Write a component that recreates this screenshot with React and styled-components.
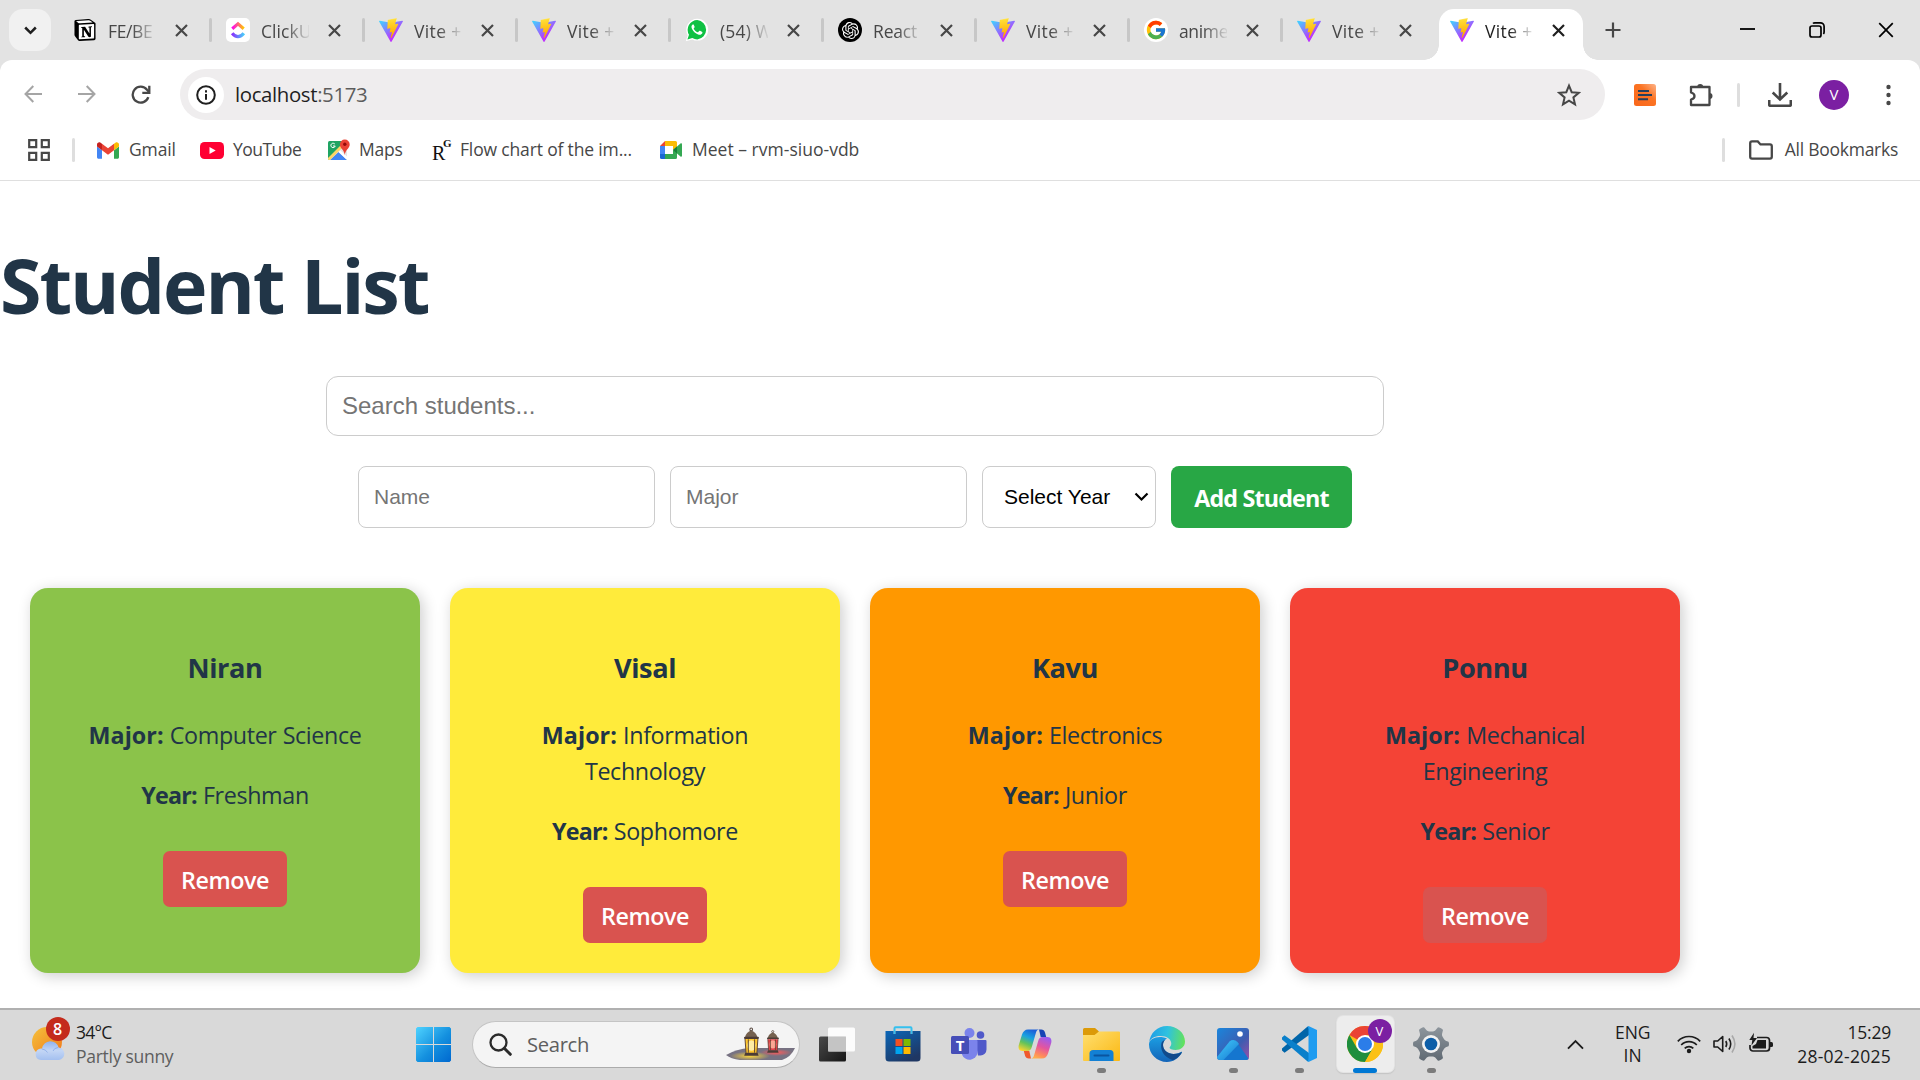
import React from "react";
import styled, { createGlobalStyle, css } from "styled-components";
import { SiNotion, SiOpenai } from "react-icons/si";
import { FcGoogle } from "react-icons/fc";

const UI = '"Segoe UI", "Open Sans", "Noto Sans", sans-serif';

const GlobalStyle = createGlobalStyle`
  *, *::before, *::after { box-sizing: border-box; }
  body { margin: 0; background: #fff; font-family: ${UI}; overflow: hidden; }
  svg { display: block; flex: none; }
`;

const Screen = styled.div`
  width: 1920px;
  height: 1080px;
  display: flex;
  flex-direction: column;
  overflow: hidden;
`;

const Txt = styled.span`
  font-family: ${UI};
  font-size: ${(p) => p.$size || 17.5}px;
  font-weight: ${(p) => p.$weight || 400};
  letter-spacing: ${(p) => p.$ls || 0}em;
  color: ${(p) => p.$color || "#474747"};
  white-space: nowrap;
`;

/* ---------- tab strip ---------- */
const TabStrip = styled.div`
  height: 60px;
  flex: none;
  background: #e3e3e3;
  display: flex;
  padding-left: 9px;
`;
const TabSearch = styled.button`
  width: 42px;
  height: 42px;
  margin: 9px 11px 0 0;
  border: 0;
  padding: 0;
  border-radius: 14px;
  background: #f1f1f1;
  display: flex;
  align-items: center;
  justify-content: center;
`;
const TabItem = styled.div`
  width: 144px;
  height: ${(p) => (p.$active ? 51 : 42)}px;
  margin-top: 9px;
  padding: 0 0 ${(p) => (p.$active ? 9 : 0)}px 11px;
  display: flex;
  align-items: center;
  flex: none;
  ${(p) =>
    p.$active &&
    css`
      position: relative;
      background: #fff;
      border-radius: 15px 15px 0 0;
      &::before,
      &::after {
        content: "";
        position: absolute;
        bottom: 0;
        width: 15px;
        height: 15px;
      }
      &::before {
        left: -15px;
        background: radial-gradient(circle at 0 0, transparent 14.5px, #fff 15px);
      }
      &::after {
        right: -15px;
        background: radial-gradient(circle at 100% 0, transparent 14.5px, #fff 15px);
      }
    `}
`;
const TabLabel = styled.div`
  width: 48px;
  margin: 2px 19px 0 11px;
  overflow: hidden;
  white-space: nowrap;
  font-size: 17.5px;
  line-height: 26px;
  letter-spacing: ${(p) => p.$ls}em;
  color: ${(p) => (p.$active ? "#1f1f1f" : "#474747")};
  mask-image: linear-gradient(to right, #000 50%, transparent 105%);
`;
const TabGap = styled.div`
  width: 9px;
  height: 24px;
  margin-top: 18px;
  flex: none;
  display: flex;
  justify-content: center;
  &::before {
    content: "";
    width: 3px;
    border-radius: 1.5px;
    background: ${(p) => (p.$hidden ? "transparent" : "#c7c7c7")};
  }
`;
const NewTab = styled.div`
  width: 60px;
  height: 60px;
  display: flex;
  align-items: center;
  justify-content: center;
`;
const WindowButtons = styled.div`
  margin-left: auto;
  display: flex;
  height: 59px;
`;
const WindowButton = styled.div`
  width: 69px;
  display: flex;
  align-items: center;
  justify-content: center;
`;
const Favicon = styled.div`
  width: 24px;
  height: 24px;
  flex: none;
  display: flex;
  align-items: center;
  justify-content: center;
  border-radius: ${(p) => p.$radius || 0};
  background: ${(p) => p.$bg || "transparent"};
`;

/* ---------- toolbar ---------- */
const ToolbarBack = styled.div`
  background: #e3e3e3;
  flex: none;
`;
const Toolbar = styled.div`
  height: 60px;
  background: #fff;
  border-radius: 12px 12px 0 0;
  display: flex;
  align-items: center;
  padding-top: 9px;
`;
const NavButton = styled.div`
  width: 54px;
  display: flex;
  justify-content: center;
  color: ${(p) => (p.$dim ? "#a5a5a5" : "#474747")};
`;
const NavGroup = styled.div`
  display: flex;
  flex: none;
  width: 180px;
  padding-left: 6px;
`;
const Omnibox = styled.div`
  flex: none;
  width: 1425px;
  height: 51px;
  border-radius: 26px;
  background: #efedee;
  display: flex;
  align-items: center;
  padding: 0 24px 0 8px;
`;
const InfoChip = styled.div`
  width: 36px;
  height: 36px;
  border-radius: 50%;
  background: #fff;
  display: flex;
  align-items: center;
  justify-content: center;
  margin-right: 11px;
`;
const UrlText = styled(Txt)`
  padding-bottom: 2px;
`;
const Spacer = styled.div`
  flex: 1;
`;
const ToolbarRight = styled.div`
  flex: none;
  display: grid;
  grid-template-columns: 55px 57px 19px 64px 44px 64px;
  padding-left: 12px;
  align-items: center;
  justify-items: center;
`;
const Divider = styled.div`
  width: 3px;
  height: 24px;
  border-radius: 1.5px;
  background: #dedede;
`;
const Avatar = styled.div`
  width: ${(p) => p.$size}px;
  height: ${(p) => p.$size}px;
  border-radius: 50%;
  background: #7b1fa2;
  color: #fff;
  font-size: ${(p) => p.$font}px;
  line-height: 1;
  display: flex;
  align-items: center;
  justify-content: center;
`;

/* ---------- bookmarks ---------- */
const Bookmarks = styled.div`
  height: 61px;
  flex: none;
  border-bottom: 1px solid #dfdfdf;
  display: flex;
  align-items: center;
  padding: 0 22px 0 28px;
`;
const Bookmark = styled.div`
  display: flex;
  align-items: center;
  width: ${(p) => (p.$w ? p.$w + "px" : "auto")};
  gap: ${(p) => p.$gap || 9}px;
`;
const BookmarkText = styled(Txt)`
  padding-bottom: 2px;
`;

/* ---------- page ---------- */
const Page = styled.main`
  flex: 1;
  min-height: 0;
  width: 1710px;
  padding-top: 62px;
`;
const Title = styled.h1`
  margin: 0 0 49px;
  font-size: 75.3px;
  line-height: 84px;
  font-weight: 700;
  letter-spacing: -0.0275em;
  color: #213547;
`;
const SearchInput = styled.input`
  display: block;
  width: 1058px;
  height: 60px;
  margin: 0 auto 30px;
  padding: 0 15px;
  border: 1px solid #ccc;
  border-radius: 12px;
  font: 24px "Liberation Sans", Arial, sans-serif;
  outline: none;
  &::placeholder { color: #757575; opacity: 1; }
`;
const Form = styled.form`
  display: flex;
  justify-content: center;
  gap: 15px;
  height: 62px;
  margin-bottom: 60px;
`;
const Field = styled.input`
  width: 297px;
  padding: 0 15px;
  border: 1px solid #ccc;
  border-radius: 8px;
  font: 21px "Liberation Sans", Arial, sans-serif;
  outline: none;
  &::placeholder { color: #757575; opacity: 1; }
`;
const SelectBox = styled.label`
  width: 174px;
  border: 1px solid #ccc;
  border-radius: 8px;
  display: flex;
  align-items: center;
  padding: 0 6px 1px 21px;
  background: #fff;
`;
const YearSelect = styled.select`
  appearance: none;
  flex: 1;
  min-width: 0;
  border: 0;
  padding: 0;
  background: transparent;
  color: #000;
  font: 21px "Liberation Sans", Arial, sans-serif;
`;
const AddButton = styled.button`
  width: 181px;
  border: 0;
  border-radius: 8px;
  background: #28a745;
  color: #fff;
  font: 700 23.3px ${UI};
  letter-spacing: -0.036em;
  padding: 2px 0 0;
  white-space: nowrap;
`;
const Cards = styled.section`
  display: grid;
  grid-template-columns: repeat(4, 390px);
  gap: 30px;
  padding: 0 30px;
`;
const Card = styled.article`
  height: 385px;
  border-radius: 18px;
  background: ${(p) => p.$bg};
  box-shadow: 3px 3px 15px rgba(0, 0, 0, 0.2);
  padding: 59px 52px 30px;
  text-align: center;
  color: #213547;
`;
const CardName = styled.h3`
  margin: 0 0 28px;
  font-size: 27.2px;
  line-height: 42px;
  font-weight: 700;
  letter-spacing: -0.016em;
`;
const CardLine = styled.p`
  margin: 0 0 24px;
  font-size: 23.3px;
  line-height: 36px;
  letter-spacing: -0.016em;
  word-spacing: 0.02em;
`;
const Strong = styled.strong`
  font-weight: 700;
  letter-spacing: ${(p) => p.$ls}em;
`;
const RemoveButton = styled.button`
  width: 124px;
  height: 56px;
  margin-top: 14px;
  border: 0;
  border-radius: 7px;
  background: #d9534f;
  color: #fff;
  font: 600 23.3px ${UI};
  letter-spacing: -0.018em;
  padding: 2px 0 0;
`;

/* ---------- taskbar ---------- */
const Taskbar = styled.footer`
  height: 72px;
  flex: none;
  border-top: 2px solid #b0b0b0;
  background: #d9d9d9;
  display: flex;
  align-items: stretch;
`;
const Weather = styled.div`
  width: 400px;
  display: flex;
  align-items: center;
  padding: 0 0 2px 31px;
  gap: 7px;
`;
const WeatherIcon = styled.div`
  position: relative;
  width: 38px;
  height: 50px;
`;
const AlertBadge = styled.div`
  position: absolute;
  left: 14.5px;
  top: -2px;
  width: 24px;
  height: 24px;
  border-radius: 50%;
  background: #c42b1c;
  color: #fff;
  font-size: 16px;
  font-weight: 600;
  line-height: 24px;
  text-align: center;
`;
const Stack = styled.div`
  display: flex;
  flex-direction: column;
  align-items: ${(p) => p.$align || "flex-start"};
  line-height: ${(p) => p.$lh || 24}px;
`;
const StartButton = styled.div`
  width: 72px;
  display: flex;
  align-items: center;
  padding: 0 0 1px 16px;
`;
const SearchPill = styled.div`
  width: 328px;
  height: 47px;
  margin-top: 11px;
  border: 1.5px solid #c4c4c4;
  border-bottom-color: #ababab;
  border-radius: 24px;
  background: #f4f4f4;
  display: flex;
  align-items: center;
  padding: 0 3px 1px 16px;
`;
const SearchLabel = styled(Txt)`
  margin-left: 15px;
  padding-bottom: 1px;
`;
const Apps = styled.div`
  display: flex;
  margin-left: 4px;
`;
const AppSlot = styled.div`
  width: 66px;
  height: 70px;
  display: flex;
  flex-direction: column;
  align-items: center;
  padding-top: 6px;
`;
const AppTile = styled.div`
  position: relative;
  width: 57px;
  height: 56px;
  border-radius: 6px;
  display: flex;
  align-items: center;
  justify-content: center;
  ${(p) =>
    p.$active &&
    css`
      background: #ededed;
      box-shadow: 0 0 0 1px #e3e3e3, 0 1px 1px 1px #c4c4c4;
    `}
`;
const Indicator = styled.div`
  position: relative;
  width: ${(p) => (p.$active ? 24 : 9)}px;
  height: 5px;
  margin-top: -4px;
  border-radius: 2.5px;
  background: ${(p) => (p.$active ? "#0078d4" : "#7c7c7c")};
`;
const ProfileBadge = styled.div`
  position: absolute;
  right: 2px;
  top: 3px;
`;
const Tray = styled.div`
  margin-left: auto;
  padding: 0 29px 2px 0;
  display: flex;
  align-items: center;
`;
const TrayChevron = styled.svg`
  margin-right: 31px;
`;
const TrayIcons = styled.div`
  display: flex;
  gap: 12px;
  margin: 0 24px 0 27px;
`;

/* ---------- icons ---------- */
const CloseX = ({ color = "#474747", s = 13, w = 2.2 }) => (
  <svg width={s} height={s} viewBox="0 0 13 13">
    <path d="M1 1l11 11M12 1L1 12" stroke={color} strokeWidth={w} fill="none" />
  </svg>
);

const ViteLogo = () => (
  <svg width="24" height="24" viewBox="0 0 256 257">
    <defs>
      <linearGradient id="viteA" x1="-.828%" x2="57.636%" y1="7.652%" y2="78.411%">
        <stop offset="0%" stopColor="#41D1FF" />
        <stop offset="100%" stopColor="#BD34FE" />
      </linearGradient>
      <linearGradient id="viteB" x1="43.376%" x2="50.316%" y1="2.242%" y2="89.03%">
        <stop offset="0%" stopColor="#FFEA83" />
        <stop offset="8.333%" stopColor="#FFDD35" />
        <stop offset="100%" stopColor="#FFA800" />
      </linearGradient>
    </defs>
    <path fill="url(#viteA)" d="M255.153 37.938L134.897 252.976c-2.483 4.44-8.862 4.466-11.382.048L.875 37.958c-2.746-4.814 1.371-10.646 6.827-9.67l120.385 21.517a6.537 6.537 0 0 0 2.322-.004l117.867-21.483c5.438-.991 9.574 4.796 6.877 9.62Z" />
    <path fill="url(#viteB)" d="M185.432.063L96.44 17.501a3.268 3.268 0 0 0-2.634 3.014l-5.474 92.456a3.268 3.268 0 0 0 3.997 3.378l24.777-5.718c2.318-.535 4.413 1.507 3.936 3.838l-7.361 36.047c-.495 2.426 1.782 4.5 4.151 3.78l15.304-4.649c2.372-.72 4.652 1.36 4.15 3.788l-11.698 56.621c-.732 3.542 3.979 5.473 5.943 2.437l1.313-2.028l72.516-144.72c1.215-2.423-.88-5.186-3.54-4.672l-25.505 4.922c-2.396.462-4.435-1.77-3.759-4.114l16.646-57.705c.677-2.35-1.37-4.583-3.769-4.113Z" />
  </svg>
);

const NotionIcon = () => (
  <Favicon $bg="radial-gradient(#fff 60%, transparent 70%)">
    <SiNotion size={22} color="#000" />
  </Favicon>
);

const ClickUpIcon = () => (
  <Favicon $bg="#fff" $radius="5px">
    <svg width="24" height="24" viewBox="0 0 24 24">
      <defs>
        <linearGradient id="cuTop" x1="0" x2="1">
          <stop offset="0" stopColor="#ff02f0" />
          <stop offset="1" stopColor="#ffc800" />
        </linearGradient>
        <linearGradient id="cuBottom" x1="0" x2="1">
          <stop offset="0" stopColor="#8930fd" />
          <stop offset="1" stopColor="#49ccf9" />
        </linearGradient>
      </defs>
      <path d="M6.3 10.7L12 5.8l5.7 4.9" fill="none" stroke="url(#cuTop)" strokeWidth="3.2" />
      <path d="M6.2 15.2q2.6 3.4 5.8 3.4t5.8-3.4" fill="none" stroke="url(#cuBottom)" strokeWidth="3.2" />
    </svg>
  </Favicon>
);

const WhatsAppIcon = () => (
  <svg width="24" height="24" viewBox="0 0 24 24">
    <path d="M12.3 0.8a10.8 10.8 0 0 1 0 21.8 11 11 0 0 1-5-1.2L.8 23.2l1.9-6A11 11 0 0 1 12.3.8z" fill="#fff" />
    <path d="M12.3 2a9.8 9.8 0 0 1 0 19.5 10 10 0 0 1-5-1.4l-4.9 1.5 1.6-4.8A9.8 9.8 0 0 1 12.3 2z" fill="#0fc143" />
    <path d="M8.9 6.9c-.3-.6-1.2-.5-1.7 0-1 1-1 2.5 0 4.3 1.4 2.5 3.3 4.3 5.9 5.2 2 .7 3.6.1 4.2-1.2.2-.5.2-1 0-1.2l-2.200-1.200c-.4-.2-.7-.1-1 .3l-.8 1c-.2.2-.4.2-.7.1-1.7-.7-2.9-1.8-3.8-3.3-.2-.3-.1-.5.1-.7l.7-.9c.1-.2.1-.4 0-.6z" fill="#fff" />
  </svg>
);

const OpenAiIcon = () => (
  <Favicon $bg="#000" $radius="50%">
    <SiOpenai size={17} color="#fff" />
  </Favicon>
);

const GoogleIcon = () => (
  <Favicon $bg="#fff" $radius="50%">
    <FcGoogle size={22} />
  </Favicon>
);

const GmailIcon = () => (
  <svg width="22" height="17" viewBox="52 42 88 66">
    <path fill="#4285f4" d="M58 108h14V74L52 59v43c0 3.32 2.69 6 6 6" />
    <path fill="#34a853" d="M120 108h14c3.32 0 6-2.69 6-6V59l-20 15" />
    <path fill="#fbbc04" d="M120 48v26l20-15v-8c0-7.42-8.47-11.65-14.4-7.2" />
    <path fill="#ea4335" d="M72 74V48l24 18 24-18v26L96 92" />
    <path fill="#c5221f" d="M52 51v8l20 15V48l-5.6-4.2c-5.94-4.45-14.4-.22-14.4 7.2" />
  </svg>
);

const YouTubeIcon = () => (
  <svg width="24" height="17" viewBox="0 0 24 17">
    <rect width="24" height="17" rx="4.5" fill="#ff0033" />
    <path d="M9.5 4.9v7.2l6.2-3.6z" fill="#fff" />
  </svg>
);

const MapsIcon = () => (
  <svg width="22" height="22" viewBox="0 0 22 22">
    <defs>
      <clipPath id="mapClip">
        <rect x="0" y="2" width="19" height="19" rx="1.5" />
      </clipPath>
    </defs>
    <g clipPath="url(#mapClip)">
      <rect x="0" y="2" width="19" height="19" fill="#1fa463" />
      <path d="M0 21L19 2v19z" fill="#e6e6e6" />
      <path d="M2 21l8.5-8L19 21z" fill="#4285f4" />
      <path d="M-1 20L17 2l2 2L1 22z" fill="#fdd567" />
      <path d="M10.5 13l8.5 8v-3.5l-6.8-6.3z" fill="#fff" />
    </g>
    <path d="M6.9 5.2A2.2 2.2 0 1 0 7.200 7H5" stroke="#fff" strokeWidth="1" fill="none" />
    <path d="M16.8.5a4.9 4.9 0 0 1 4.9 4.9c0 4.1-4.4 5-4.9 10.6-.5-5.6-4.900-6.500-4.900-10.600A4.900 4.900 0 0 1 16.800.5z" fill="#ea4335" />
    <circle cx="16.8" cy="5.3" r="1.7" fill="#960a0a" />
  </svg>
);

const ResearchGate = styled.div`
  width: 20px;
  height: 24px;
  display: flex;
  align-items: flex-start;
  font-family: "Liberation Serif", serif;
  color: #111;
`;
const RgR = styled.span`
  font-size: 20px;
  line-height: 30px;
  width: 11px;
`;
const RgG = styled.span`
  font-size: 11px;
  line-height: 11px;
  font-weight: 700;
`;

const MeetIcon = () => (
  <svg width="22" height="18" viewBox="0 0 22 18">
    <path d="M0 5L5 0v5z" fill="#ea4335" />
    <path d="M5 0h10.500a1.500 1.500 0 0 1 1.500 1.500V7l-4 2V5H5z" fill="#fbbc04" />
    <path d="M0 5h5v8H0z" fill="#4285f4" />
    <path d="M0 13h5v5H1.500A1.500 1.500 0 0 1 0 16.500z" fill="#1967d2" />
    <path d="M5 13h8V9l4 2v5.500a1.500 1.500 0 0 1-1.500 1.500H5z" fill="#34a853" />
    <path d="M13 9l7.500-6.500c.6-.5 1.500-.1 1.500.7v11.600c0 .8-.9 1.200-1.500.7z" fill="#34a853" />
    <path d="M13 9l4-3.500v7z" fill="#188038" />
  </svg>
);

const TABS = [
  { icon: NotionIcon, label: "FE/BE", ls: -0.02 },
  { icon: ClickUpIcon, label: "ClickUp", ls: 0.005 },
  { icon: ViteLogo, label: "Vite + R", ls: 0.02 },
  { icon: ViteLogo, label: "Vite + R", ls: 0.02 },
  { icon: WhatsAppIcon, label: "(54) Wh", ls: 0.01 },
  { icon: OpenAiIcon, label: "React (", ls: -0.01 },
  { icon: ViteLogo, label: "Vite + R", ls: 0.02 },
  { icon: GoogleIcon, label: "anime i", ls: -0.02 },
  { icon: ViteLogo, label: "Vite + R", ls: 0.02 },
  { icon: ViteLogo, label: "Vite + R", ls: 0.02, active: true },
];

const STUDENTS = [
  { name: "Niran", major: "Computer Science", year: "Freshman", bg: "#8bc34a" },
  { name: "Visal", major: "Information Technology", year: "Sophomore", bg: "#ffeb3b" },
  { name: "Kavu", major: "Electronics", year: "Junior", bg: "#ff9800" },
  { name: "Ponnu", major: "Mechanical Engineering", year: "Senior", bg: "#f44336" },
];

const SunCloud = () => (
  <svg width="38" height="50" viewBox="0 0 38 50">
    <defs>
      <linearGradient id="sun" x1="0" y1="0" x2="1" y2="1">
        <stop offset="0" stopColor="#f5c23c" />
        <stop offset="1" stopColor="#f0761a" />
      </linearGradient>
      <linearGradient id="cloud" x1="0" y1="0" x2="0" y2="1">
        <stop offset="0" stopColor="#8fb2ee" />
        <stop offset="0.5" stopColor="#c3d6f5" />
        <stop offset="1" stopColor="#a4c0f0" />
      </linearGradient>
    </defs>
    <circle cx="16" cy="23" r="15" fill="url(#sun)" />
    <path d="M10 41a5.8 5.8 0 0 1-.5-11.5 3 3 0 0 1 1.5 0 8.5 8.5 0 0 1 16.6-1A6.3 6.3 0 0 1 28 41z" fill="url(#cloud)" />
    <path d="M11 30q4 .5 5.500 3.500M27 28.500q-4 .5-5 3.500" stroke="#7ea3e6" strokeWidth="1" fill="none" opacity=".7" />
  </svg>
);

const WindowsLogo = () => (
  <svg width="35" height="35" viewBox="0 0 35 35">
    <defs>
      <linearGradient id="win" x1="0" y1="0" x2="35" y2="35" gradientUnits="userSpaceOnUse">
        <stop offset="0" stopColor="#4fd3ff" />
        <stop offset="0.55" stopColor="#1490df" />
        <stop offset="1" stopColor="#0068cf" />
      </linearGradient>
    </defs>
    <path fill="url(#win)" d="M1.500 0H17v17H0V1.500zM18 0h15.500L35 1.500V17H18zM0 18h17v17H1.500L0 33.500zM18 18h17v15.500L33.500 35H18z" />
  </svg>
);

const Lantern = ({ x, y, k, glass, glow }) => (
  <g transform={`translate(${x} ${y}) scale(${k})`}>
    <circle cx="7" cy="1.4" r="1.3" fill="none" stroke="#5a4a42" strokeWidth="1" />
    <path d="M7 2.500c3 .8 5.500 3.500 6 6.500H1c.5-3 3-5.700 6-6.500z" fill="#75614f" />
    <rect x="0" y="8.500" width="14.500" height="2.200" rx="1" fill="#4c3c36" />
    <path d="M1 10.700h12.500l-1 13.500h-10.500z" fill={glass} />
    <ellipse cx="7.200" cy="17" rx="4" ry="5" fill={glow} opacity=".85" />
    <path d="M1 10.700l1 13.500M13.500 10.700l-1 13.500M4.200 11v13M10.300 11v13" stroke="#5a4030" strokeWidth=".9" fill="none" />
    <path d="M1.200 24h12l1 3H.2z" fill="#4c3c36" />
  </g>
);

const LanternArt = () => (
  <svg width="70" height="40" viewBox="0 0 70 40">
    <defs>
      <radialGradient id="glowY">
        <stop offset="0" stopColor="#ffd83a" />
        <stop offset="1" stopColor="#ffd83a" stopOpacity="0" />
      </radialGradient>
      <radialGradient id="glowR">
        <stop offset="0" stopColor="#ff5a5a" />
        <stop offset="1" stopColor="#ff5a5a" stopOpacity="0" />
      </radialGradient>
    </defs>
    <path d="M0 31q10-6 24-7h45q-4 9-13 12H14Q5 35 0 31z" fill="#777282" />
    <ellipse cx="24" cy="32" rx="20" ry="4.500" fill="url(#glowY)" />
    <ellipse cx="50" cy="28.500" rx="16" ry="3.500" fill="url(#glowR)" />
    <Lantern x={18} y={4} k={1.03} glass="#ffc72e" glow="#fff3b8" />
    <Lantern x={41} y={6.5} k={0.82} glass="#e0434a" glow="#ffb9a0" />
  </svg>
);

const TaskViewIcon = () => (
  <svg width="36" height="35" viewBox="0 0 36 35">
    <defs>
      <linearGradient id="tvDark" x1="0" y1="0" x2="1" y2="1">
        <stop offset="0" stopColor="#4a4a4a" />
        <stop offset="1" stopColor="#161616" />
      </linearGradient>
    </defs>
    <rect x="0" y="9.500" width="27" height="25" rx="1.500" fill="url(#tvDark)" />
    <rect x="9" y="0.500" width="27" height="24" rx="1.500" fill="#fff" fillOpacity=".9" />
    <rect x="9" y="9.500" width="18" height="15" fill="#bdbdbd" opacity=".85" />
  </svg>
);

const StoreIcon = () => (
  <svg width="36" height="36" viewBox="0 0 36 36">
    <defs>
      <linearGradient id="store" x1="0" y1="0" x2=".6" y2="1">
        <stop offset="0" stopColor="#0a66b8" />
        <stop offset="1" stopColor="#1f3763" />
      </linearGradient>
    </defs>
    <path d="M9.500 8V2.200a1 1 0 0 1 1-1h15a1 1 0 0 1 1 1V8" fill="none" stroke="#35c0ee" strokeWidth="2" />
    <path d="M.5 5h8v3h2V5h15v3h2V5h8v27a3.500 3.500 0 0 1-3.500 3.500H4A3.500 3.500 0 0 1 .5 32z" fill="url(#store)" />
    <rect x="10.500" y="13" width="7" height="7" fill="#f25022" />
    <rect x="18.500" y="13" width="7" height="7" fill="#7fba00" />
    <rect x="10.500" y="21" width="7" height="7" fill="#00a4ef" />
    <rect x="18.500" y="21" width="7" height="7" fill="#ffb900" />
  </svg>
);

const TeamsIcon = () => (
  <svg width="36" height="36" viewBox="0 0 36 36">
    <circle cx="18.500" cy="7" r="5" fill="#7b83eb" />
    <circle cx="29.500" cy="9" r="3.800" fill="#5059c9" />
    <path d="M24 14h10.500a1 1 0 0 1 1 1v8.500a6 6 0 0 1-6 6H27z" fill="#5059c9" />
    <path d="M11 14h14.500a1 1 0 0 1 1 1v11.500a8 8 0 0 1-15.500 2z" fill="#7b83eb" />
    <rect x="0" y="10" width="18" height="18" rx="1.500" fill="#464eb8" />
    <text x="9" y="24.500" textAnchor="middle" fontFamily="Open Sans, sans-serif" fontWeight="700" fontSize="15" fill="#fff">T</text>
  </svg>
);

const CopilotIcon = () => (
  <svg width="36" height="36" viewBox="0 0 36 36">
    <defs>
      <linearGradient id="cpA" x1=".6" y1="0" x2=".2" y2="1">
        <stop offset="0" stopColor="#1c5fd8" />
        <stop offset=".35" stopColor="#19a2e0" />
        <stop offset=".65" stopColor="#63c35a" />
        <stop offset="1" stopColor="#ffd52e" />
      </linearGradient>
      <linearGradient id="cpB" x1=".7" y1="0" x2=".3" y2="1">
        <stop offset="0" stopColor="#9a5cf0" />
        <stop offset=".45" stopColor="#e3559f" />
        <stop offset=".8" stopColor="#ff8a5c" />
        <stop offset="1" stopColor="#ffb04a" />
      </linearGradient>
    </defs>
    <path d="M22 3.500h2.200a4 4 0 0 1 3.800 2.900L29.200 11h-5.500z" fill="#1743b5" />
    <path d="M11 3.500h11.500c-2 0-3 1.300-3.500 3L14.800 21c-.7 2.500-2 4-4.500 4H5.500C2 25 1 22 1.800 19L5 8.500C6 5.500 8 3.500 11 3.500z" fill="url(#cpA)" />
    <path d="M25 32.500H13.500c2 0 3-1.300 3.500-3L21.200 15c.7-2.500 2-4 4.500-4h4.800c3.500 0 4.500 3 3.700 6L31 27.500c-1 3-3 5-6 5z" fill="url(#cpB)" />
    <path d="M14 32.500h-2.200A4 4 0 0 1 8 29.600L6.800 25h5.500z" fill="#f0592c" />
  </svg>
);

const ExplorerIcon = () => (
  <svg width="37" height="36" viewBox="0 0 37 36">
    <defs>
      <linearGradient id="fold" x1="0" y1="0" x2="1" y2="1">
        <stop offset="0" stopColor="#ffdf70" />
        <stop offset="1" stopColor="#fbb813" />
      </linearGradient>
    </defs>
    <path d="M0 10V3.500A1.500 1.500 0 0 1 1.500 2H12l4 3.500L12 10z" fill="#dc9a08" />
    <path d="M0 9h11.500L16 5.500h20a1 1 0 0 1 1 1V34a1 1 0 0 1-1 1H1a1 1 0 0 1-1-1z" fill="url(#fold)" />
    <path d="M6.500 35v-7.500A3.500 3.500 0 0 1 10 24h17a3.500 3.500 0 0 1 3.500 3.500V35z" fill="#1380d4" />
    <path d="M11.500 29.500h14" stroke="#0a55a0" strokeWidth="2" strokeLinecap="round" />
  </svg>
);

const EdgeIcon = () => (
  <svg width="36" height="36" viewBox="0 0 36 36">
    <defs>
      <linearGradient id="edT" x1="0" y1=".4" x2="1" y2=".5">
        <stop offset="0" stopColor="#1f9de6" />
        <stop offset=".5" stopColor="#2fc2df" />
        <stop offset="1" stopColor="#63e25a" />
      </linearGradient>
      <linearGradient id="edL" x1="0" y1="0" x2="0" y2="1">
        <stop offset="0" stopColor="#1b9de2" />
        <stop offset="1" stopColor="#1464b8" />
      </linearGradient>
    </defs>
    <path d="M0 18.500C0 13.800 5 11 11 11c4 0 7 1.500 7 1.500s-4 2-4 6.500c0 5.500 5 9 10.500 9 3.500 0 6-1.200 7.700-2.200.6-.3 1 .2.700.7C30 32 24.500 36 18 36 8 36 0 28 0 18.500z" fill="url(#edL)" />
    <path d="M12.500 17c-1.500 6 1.500 14 11.500 17.200C31 31 33 26.500 33 26c-1.700 1-5 2-8.500 2-5.500 0-10.300-3.500-10.500-9 0-2.500 1-4 2-5-2 .5-3 1.500-3.500 3z" fill="#114a8b" />
    <path d="M.2 16.500C1 7 8.500 0 18 0c10 0 18 7 18 15.500 0 5.500-4.500 8.500-9.500 8.500-3.500 0-6-1-6-2.200 0-.8 1.800-1.600 1.800-4.300 0-4-4.300-7.500-10.800-7.500C5.500 10 1.300 12.500.2 16.500z" fill="url(#edT)" />
  </svg>
);

const PhotosIcon = () => (
  <svg width="32" height="36" viewBox="0 0 32 36">
    <defs>
      <linearGradient id="phB" x1="0" y1="0" x2="1" y2="1">
        <stop offset="0" stopColor="#1a86dc" />
        <stop offset=".6" stopColor="#3e5cb0" />
        <stop offset="1" stopColor="#9b4fa8" />
      </linearGradient>
      <linearGradient id="phM" x1="0" y1="0" x2="1" y2="1">
        <stop offset="0" stopColor="#46d3ff" />
        <stop offset="1" stopColor="#1474cf" />
      </linearGradient>
      <clipPath id="phC">
        <rect y="2" width="32" height="32" rx="3" />
      </clipPath>
    </defs>
    <g clipPath="url(#phC)">
      <rect y="2" width="32" height="32" fill="url(#phB)" />
      <path d="M13.500 15q3.500-2 6.500 1.500L34 36H2z" fill="#1576cf" />
      <path d="M12.500 15.500q4-3 8 .5l1.500 2L4.500 36H-4z" fill="url(#phM)" />
    </g>
    <circle cx="23" cy="8" r="2.800" fill="#fff" />
  </svg>
);

const CodeIcon = () => (
  <svg width="36" height="36" viewBox="0 0 36 36">
    <path d="M1 24.500l2.500 2.200L28 9V.5L26 1 1 22.500z" fill="#0065a9" />
    <path d="M1 11.500l2.500-2.200L28 27v8.500L26 35 1 13.500z" fill="#0a80cb" />
    <path d="M26 .5l2-.3L36 4v28l-8 3.800-2-.3q1.500-.5 1.500-2.500V3Q27.500 1 26 .5z" fill="#1f9cf0" />
  </svg>
);

const ChromeIcon = () => (
  <svg width="36" height="36" viewBox="0 0 36 36">
    <circle cx="18" cy="18" r="18" fill="#fbc116" />
    <path d="M18 18L2.410 9A18 18 0 0 1 33.590 9H18z" fill="#ea4335" />
    <path d="M18 18L10.200 22.500 2.410 9A18 18 0 0 0 18 36l7.800-13.500z" fill="#1e8e3e" />
    <path d="M18 9h15.590A18 18 0 0 1 18 36l7.800-13.500z" fill="#fbc116" />
    <circle cx="18" cy="18" r="9" fill="#fff" />
    <circle cx="18" cy="18" r="7" fill="#2b7de9" />
  </svg>
);

const SettingsIcon = () => (
  <svg width="36" height="36" viewBox="0 0 36 36">
    <defs>
      <linearGradient id="gear" x1="0" y1="0" x2="0" y2="1">
        <stop offset="0" stopColor="#8d959c" />
        <stop offset="1" stopColor="#606a73" />
      </linearGradient>
    </defs>
    <path d="M8 2.200q2-1.200 3-.9l2.800 3.200q1.200 1 2.700 1h3q1.500 0 2.700-1L25 1.300q1 0 3 .9 1.800 1 2 1.800l-1 4q-.2 1.500.6 2.800l1.500 2.500q.8 1.200 2.200 1.700l2.200.8q.5 1 .5 2.200t-.5 2.200l-2.200.8q-1.400.5-2.200 1.700l-1.500 2.500q-.8 1.300-.6 2.800l1 4q-.2.8-2 1.800-2 1-3 .9l-2.800-3.200q-1.200-1-2.700-1h-3q-1.500 0-2.700 1L11 34.700q-1 0-3-.9-1.800-1-2-1.800l1-4q.2-1.500-.6-2.800l-1.500-2.500q-.8-1.200-2.200-1.700L.5 20.200Q0 19.200 0 18t.5-2.200l2.200-.8q1.400-.5 2.200-1.700l1.500-2.500Q7.200 9.500 7 8L6 4q.2-.8 2-1.800z" fill="url(#gear)" />
    <circle cx="18" cy="18" r="9" fill="#f2f2f2" />
    <circle cx="18" cy="18" r="6.300" fill="#0d5ea8" />
  </svg>
);

const APPS = [
  { icon: TaskViewIcon },
  { icon: StoreIcon },
  { icon: TeamsIcon },
  { icon: CopilotIcon },
  { icon: ExplorerIcon, open: true },
  { icon: EdgeIcon },
  { icon: PhotosIcon, open: true },
  { icon: CodeIcon, open: true },
  { icon: ChromeIcon, open: true, active: true },
  { icon: SettingsIcon, open: true },
];

function BrowserTabs() {
  return (
    <TabStrip>
      <TabSearch>
        <svg width="13" height="9" viewBox="0 0 13 9">
          <path d="M1.200 1.500L6.500 6.800l5.300-5.300" fill="none" stroke="#1f1f1f" strokeWidth="2.500" />
        </svg>
      </TabSearch>
      {TABS.map((t, i) => (
        <React.Fragment key={i}>
          <TabItem $active={t.active}>
            <t.icon />
            <TabLabel $ls={t.ls} $active={t.active}>{t.label}</TabLabel>
            <CloseX color={t.active ? "#1f1f1f" : "#474747"} />
          </TabItem>
          {i < TABS.length - 1 && <TabGap $hidden={i === TABS.length - 2} />}
        </React.Fragment>
      ))}
      <NewTab>
        <svg width="16" height="16" viewBox="0 0 16 16">
          <path d="M8 .5v15M.5 8h15" stroke="#474747" strokeWidth="2.200" />
        </svg>
      </NewTab>
      <WindowButtons>
        <WindowButton>
          <svg width="15" height="3" viewBox="0 0 15 3">
            <path d="M0 1h15" stroke="#000" strokeWidth="1.800" />
          </svg>
        </WindowButton>
        <WindowButton>
          <svg width="16" height="16" viewBox="0 0 16 16">
            <rect x="1" y="4" width="11" height="11" rx="2" fill="none" stroke="#000" strokeWidth="1.700" />
            <path d="M4 1.500q.5-.6 2-.6h5.500a3.600 3.600 0 0 1 3.600 3.600V10q0 1.300-.7 2" fill="none" stroke="#000" strokeWidth="1.700" />
          </svg>
        </WindowButton>
        <WindowButton>
          <CloseX color="#000" s={16} w={1.4} />
        </WindowButton>
      </WindowButtons>
    </TabStrip>
  );
}

function AddressBar() {
  return (
    <ToolbarBack>
      <Toolbar>
        <NavGroup>
          <NavButton $dim>
            <svg width="18" height="18" viewBox="0 0 18 18">
              <path d="M9.300 1L1.500 9l7.800 8M1.500 9H18" fill="none" stroke="currentColor" strokeWidth="2" />
            </svg>
          </NavButton>
          <NavButton $dim>
            <svg width="18" height="18" viewBox="0 0 18 18">
              <path d="M8.700 1l7.800 8-7.800 8M16.500 9H0" fill="none" stroke="currentColor" strokeWidth="2" />
            </svg>
          </NavButton>
          <NavButton>
            <svg width="20" height="20" viewBox="0 0 20 20">
              <path d="M17.300 12.200A8 8 0 1 1 16 4.700l2 2.300" fill="none" stroke="currentColor" strokeWidth="2.300" />
              <path d="M18.300.8v7h-7" fill="none" stroke="currentColor" strokeWidth="2.300" />
            </svg>
          </NavButton>
        </NavGroup>
        <Omnibox>
          <InfoChip>
            <svg width="20" height="20" viewBox="0 0 20 20">
              <circle cx="10" cy="10" r="8.800" fill="none" stroke="#1f1f1f" strokeWidth="2" />
              <path d="M10 9v5.800M10 5.200v2.200" stroke="#1f1f1f" strokeWidth="2" />
            </svg>
          </InfoChip>
          <UrlText $size={20.4} $ls={-0.018} $color="#1f1f1f">
            localhost<Txt as="span" $size={20.4} $ls={-0.018} $color="#5c5c5c">:5173</Txt>
          </UrlText>
          <Spacer />
          <svg width="24" height="24" viewBox="0 0 24 24">
            <path d="M12 2.700l2.700 6.500 7 .6-5.300 4.600 1.600 6.900L12 17.600l-6 3.700 1.600-6.900L2.300 9.800l7-.6z" fill="none" stroke="#474747" strokeWidth="2" />
          </svg>
        </Omnibox>
        <ToolbarRight>
          <svg width="22" height="22" viewBox="0 0 22 22">
            <defs>
              <linearGradient id="ext" x1="1" y1="0" x2="0" y2="1">
                <stop offset="0" stopColor="#fdb48a" />
                <stop offset=".4" stopColor="#fb7424" />
                <stop offset="1" stopColor="#f9661a" />
              </linearGradient>
            </defs>
            <rect width="22" height="22" rx="2.500" fill="url(#ext)" />
            <path d="M4 7h11M4 11h14M4 15.300h10" stroke="#263f5c" strokeWidth="2" />
          </svg>
          <svg width="26" height="26" viewBox="0 0 26 26">
            <path d="M3 5h18.500v18H3v-5.500q3.500-.8 3.500-3.500T3 10.500z" fill="none" stroke="#474747" strokeWidth="2.300" strokeLinejoin="round" />
            <path d="M9.200 5a3 3 0 0 1 6 0zM21.500 11a3 3 0 0 1 0 6z" fill="#474747" />
          </svg>
          <Divider />
          <svg width="24" height="24" viewBox="0 0 24 24">
            <path d="M12 0v16M4.700 9.500L12 16.500l7.300-7M1.200 17v4.500q0 1.300 1.300 1.300h19q1.300 0 1.300-1.300V17" fill="none" stroke="#474747" strokeWidth="2.600" />
          </svg>
          <Avatar $size={30} $font={15}>V</Avatar>
          <svg width="5" height="22" viewBox="0 0 5 22">
            <g fill="#474747">
              <circle cx="2.500" cy="3" r="2.200" />
              <circle cx="2.500" cy="11" r="2.200" />
              <circle cx="2.500" cy="19" r="2.200" />
            </g>
          </svg>
        </ToolbarRight>
      </Toolbar>
    </ToolbarBack>
  );
}

function BookmarksBar() {
  return (
    <Bookmarks>
      <Bookmark $w={44}>
        <svg width="22" height="22" viewBox="0 0 22 22">
          <path d="M1.200 1.200h7v7h-7zM13.800 1.200h7v7h-7zM1.200 13.800h7v7h-7zM13.800 13.800h7v7h-7z" fill="none" stroke="#474747" strokeWidth="2.200" />
        </svg>
      </Bookmark>
      <Bookmark $w={25}><Divider /></Bookmark>
      <Bookmark $w={103} $gap={10}><GmailIcon /><BookmarkText $ls={-0.008}>Gmail</BookmarkText></Bookmark>
      <Bookmark $w={128} $gap={9}><YouTubeIcon /><BookmarkText $ls={-0.03}>YouTube</BookmarkText></Bookmark>
      <Bookmark $w={104} $gap={9}><MapsIcon /><BookmarkText $ls={-0.015}>Maps</BookmarkText></Bookmark>
      <Bookmark $w={228} $gap={8}>
        <ResearchGate><RgR>R</RgR><RgG>G</RgG></ResearchGate>
        <BookmarkText $ls={-0.009}>Flow chart of the im...</BookmarkText>
      </Bookmark>
      <Bookmark $gap={10}><MeetIcon /><BookmarkText $ls={0.001}>Meet – rvm-siuo-vdb</BookmarkText></Bookmark>
      <Spacer />
      <Bookmark $w={27}><Divider /></Bookmark>
      <Bookmark $gap={12}>
        <svg width="24" height="20" viewBox="0 0 24 20">
          <path d="M1.200 3.200q0-1.800 1.800-1.800h5.800l2.700 3h9.500q1.800 0 1.800 1.800v10.600q0 1.800-1.800 1.800H3q-1.800 0-1.800-1.800z" fill="none" stroke="#474747" strokeWidth="2.300" />
        </svg>
        <BookmarkText $ls={-0.015}>All Bookmarks</BookmarkText>
      </Bookmark>
    </Bookmarks>
  );
}

function StudentCard({ s }) {
  return (
    <Card $bg={s.bg}>
      <CardName>{s.name}</CardName>
      <CardLine><Strong $ls={0.002}>Major:</Strong> {s.major}</CardLine>
      <CardLine><Strong $ls={-0.034}>Year:</Strong> {s.year}</CardLine>
      <RemoveButton>Remove</RemoveButton>
    </Card>
  );
}

function StudentPage() {
  return (
    <Page>
      <Title>Student List</Title>
      <SearchInput placeholder="Search students..." />
      <Form onSubmit={(e) => e.preventDefault()}>
        <Field placeholder="Name" />
        <Field placeholder="Major" />
        <SelectBox>
          <YearSelect defaultValue=""><option value="">Select Year</option></YearSelect>
          <svg width="15" height="10" viewBox="0 0 15 10">
            <path d="M1.500 1.500l6 6 6-6" fill="none" stroke="#000" strokeWidth="2.200" />
          </svg>
        </SelectBox>
        <AddButton type="submit">Add Student</AddButton>
      </Form>
      <Cards>
        {STUDENTS.map((s) => <StudentCard key={s.name} s={s} />)}
      </Cards>
    </Page>
  );
}

function WindowsTaskbar() {
  return (
    <Taskbar>
      <Weather>
        <WeatherIcon>
          <SunCloud />
          <AlertBadge>8</AlertBadge>
        </WeatherIcon>
        <Stack>
          <Txt $ls={-0.042} $color="#1c1c1c">34°C</Txt>
          <Txt $ls={-0.016} $color="#5e5e5e">Partly sunny</Txt>
        </Stack>
      </Weather>
      <StartButton><WindowsLogo /></StartButton>
      <SearchPill>
        <svg width="23" height="23" viewBox="0 0 23 23">
          <circle cx="9.500" cy="9.500" r="8" fill="none" stroke="#2a2a2a" strokeWidth="2.300" />
          <path d="M15.300 15.300l6 6" stroke="#2a2a2a" strokeWidth="3" strokeLinecap="round" />
        </svg>
        <SearchLabel $size={20.2} $ls={-0.016} $color="#5e5e5e">Search</SearchLabel>
        <Spacer />
        <LanternArt />
      </SearchPill>
      <Apps>
        {APPS.map((a, i) => (
          <AppSlot key={i}>
            <AppTile $active={a.active}>
              <a.icon />
              {a.active && (
                <ProfileBadge><Avatar $size={24} $font={13}>V</Avatar></ProfileBadge>
              )}
            </AppTile>
            {a.open && <Indicator $active={a.active} />}
          </AppSlot>
        ))}
      </Apps>
      <Tray>
        <TrayChevron width="17" height="11" viewBox="0 0 17 11">
          <path d="M1 9.700l7.500-7.500L16 9.700" fill="none" stroke="#1c1c1c" strokeWidth="1.900" />
        </TrayChevron>
        <Stack $align="center" $lh={23}>
          <Txt $ls={-0.009} $color="#1c1c1c">ENG</Txt>
          <Txt $color="#1c1c1c">IN</Txt>
        </Stack>
        <TrayIcons>
          <svg width="24" height="24" viewBox="0 0 24 24">
            <g fill="none" stroke="#1c1c1c" strokeWidth="1.700">
              <path d="M.8 9.300a15.500 15.500 0 0 1 22.400 0" />
              <path d="M4.200 13a10.700 10.700 0 0 1 15.600 0" />
              <path d="M7.700 16.400a6 6 0 0 1 8.600 0" />
            </g>
            <circle cx="12" cy="19" r="2.200" fill="#1c1c1c" />
          </svg>
          <svg width="24" height="24" viewBox="0 0 24 24">
            <path d="M1 9h3.700l5-4.500v15l-5-4.500H1z" fill="none" stroke="#1c1c1c" strokeWidth="1.600" strokeLinejoin="round" />
            <path d="M12.800 9q1.800 3 0 6M15.900 6.500q3.600 5.500 0 11" fill="none" stroke="#1c1c1c" strokeWidth="1.600" />
            <path d="M19 3.500q5.800 8.500 0 17" fill="none" stroke="#a8a8a8" strokeWidth="1.600" />
          </svg>
          <svg width="24" height="24" viewBox="0 0 24 24">
            <path d="M8 5.500h9.500a3 3 0 0 1 3 3v7.500a3 3 0 0 1-3 3H4a3 3 0 0 1-3-3V13" fill="none" stroke="#1c1c1c" strokeWidth="1.700" />
            <path d="M8.500 8H17v8.500H3.500v-2.500L7 12z" fill="#1c1c1c" />
            <path d="M21 10h1.500q1.500 0 1.500 1.500v2q0 1.500-1.500 1.500H21z" fill="#1c1c1c" />
            <path d="M5 .8L.3 8h3L2.500 13.500 8 6H4.500z" fill="#1c1c1c" />
          </svg>
        </TrayIcons>
        <Stack $align="flex-end">
          <Txt $ls={-0.012} $color="#1c1c1c">15:29</Txt>
          <Txt $ls={0.014} $color="#1c1c1c">28-02-2025</Txt>
        </Stack>
      </Tray>
    </Taskbar>
  );
}

export default function App() {
  return (
    <>
      <GlobalStyle />
      <Screen>
        <BrowserTabs />
        <AddressBar />
        <BookmarksBar />
        <StudentPage />
        <WindowsTaskbar />
      </Screen>
    </>
  );
}
